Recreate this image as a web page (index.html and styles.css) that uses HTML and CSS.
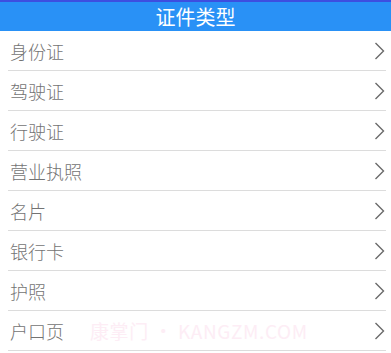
FILE: index.html
```html
<!DOCTYPE html>
<html>
<head>
<meta charset="utf-8">
<link rel="stylesheet" href="styles.css">
</head>
<body>
<div class="topstrip"></div>
<header class="header">证件类型</header>
<ul class="list">
  <li class="row"><span class="label">身份证</span><svg class="chev" viewBox="0 0 10 18"><path d="M1 1 L9 9 L1 17" /></svg></li>
  <li class="row"><span class="label">驾驶证</span><svg class="chev" viewBox="0 0 10 18"><path d="M1 1 L9 9 L1 17" /></svg></li>
  <li class="row"><span class="label">行驶证</span><svg class="chev" viewBox="0 0 10 18"><path d="M1 1 L9 9 L1 17" /></svg></li>
  <li class="row"><span class="label">营业执照</span><svg class="chev" viewBox="0 0 10 18"><path d="M1 1 L9 9 L1 17" /></svg></li>
  <li class="row"><span class="label">名片</span><svg class="chev" viewBox="0 0 10 18"><path d="M1 1 L9 9 L1 17" /></svg></li>
  <li class="row"><span class="label">银行卡</span><svg class="chev" viewBox="0 0 10 18"><path d="M1 1 L9 9 L1 17" /></svg></li>
  <li class="row"><span class="label">护照</span><svg class="chev" viewBox="0 0 10 18"><path d="M1 1 L9 9 L1 17" /></svg></li>
  <li class="row"><span class="label">户口页</span><span class="watermark">康掌门 • KANGZM.COM</span><svg class="chev" viewBox="0 0 10 18"><path d="M1 1 L9 9 L1 17" /></svg></li>
</ul>
</body>
</html>
```
FILE: styles.css
```css
html, body {
  margin: 0;
  padding: 0;
  background: #fff;
  font-family: "Noto Sans CJK SC", "Noto Sans", sans-serif;
}
.topstrip {
  height: 2px;
  background: #3d4ee0;
}
.header {
  height: 29px;
  background: #2991f6;
  color: #fff;
  font-size: 20px;
  line-height: 29px;
  text-align: center;
}
.list {
  list-style: none;
  margin: 0;
  padding: 0 5px 0 8px;
}
.row {
  height: 39px;
  border-bottom: 1px solid #dcdcdc;
  display: flex;
  align-items: center;
  padding-left: 2px;
  padding-right: 1px;
}
.label {
  font-size: 18px;
  color: #737373;
  font-weight: 300;
  flex: 1;
  line-height: 1;
}
.watermark {
  position: absolute;
  left: 90px;
  font-size: 19px;
  letter-spacing: 0.6px;
  color: #fdedf5;
  line-height: 1;
}
.chev {
  width: 11px;
  height: 18px;
  fill: none;
  stroke: #6a6a6a;
  stroke-width: 1.4;
}
```
